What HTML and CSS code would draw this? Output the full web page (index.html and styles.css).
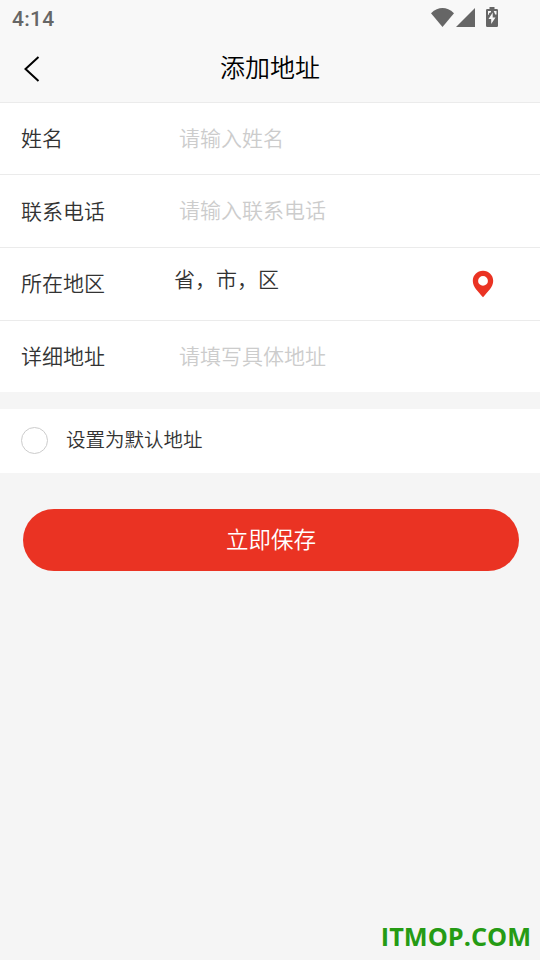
FILE: index.html
```html
<!DOCTYPE html>
<html lang="zh-CN">
<head>
<meta charset="utf-8">
<title>添加地址</title>
<link rel="stylesheet" href="styles.css">
</head>
<body>
<div class="status">
  <span class="time">4:14</span>
  <svg class="status-icons" width="70" height="24" viewBox="0 0 70 24">
    <path d="M1 7.200Q12.500-3 24 7.200L12.500 21Z"/>
    <path d="M26 21L45 2V21Z"/>
    <path d="M59.500 1h5v2h2.300q1.200 0 1.200 1.200v15.600q0 1.200-1.200 1.200h-9.600q-1.200 0-1.200-1.200V4.200q0-1.200 1.200-1.200h2.300Z"/>
    <path class="spark" d="M62.700 6.500l-4.200 6.500h2.700v5l4.300-6.500h-2.800ZM58 5h3v1.300l-1.800.7-.7 2H58ZM63.700 5H66.500v3.500h-1.300Z"/>
  </svg>
</div>
<header class="header">
  <svg class="back" width="16" height="26" viewBox="0 0 16 26"><path d="M14.500 1L1.500 13l13 12"/></svg>
  <h1 class="title">添加地址</h1>
</header>
<main>
  <section class="form">
    <div class="row row-first"><span class="label">姓名</span><span class="hint">请输入姓名</span></div>
    <div class="row"><span class="label label-lowered">联系电话</span><span class="hint">请输入联系电话</span></div>
    <div class="row"><span class="label">所在地区</span><span class="region">省，市，区</span>
      <svg class="pin" width="22" height="28" viewBox="0 0 22 28"><path fill-rule="evenodd" d="M11 .8C5.200.8.800 5.200.800 10.800.800 17 6 21.500 11 27.300 16 21.500 21.200 17 21.200 10.800 21.200 5.200 16.800.8 11 .8ZM11 6a4.900 4.900 0 1 1 0 9.800A4.900 4.900 0 0 1 11 6Z"/></svg>
    </div>
    <div class="row row-last"><span class="label">详细地址</span><span class="hint">请填写具体地址</span></div>
  </section>
  <section class="default"><span class="radio"></span><span class="default-text">设置为默认地址</span></section>
  <button class="save">立即保存</button>
</main>
<footer class="mark">ITMOP.COM</footer>
</body>
</html>
```
FILE: styles.css
```css
* { box-sizing: border-box; }
body {
  margin: 0;
  height: 960px;
  display: flex;
  flex-direction: column;
  overflow: hidden;
  background: #f5f5f5;
  color: #333;
  font-family: "Noto Sans CJK SC", sans-serif;
  font-size: 21px;
  font-weight: 350;
}
.status {
  height: 36px;
  display: flex;
  justify-content: space-between;
  padding: 6px 40px 0 12px;
  background: #f8f8f8;
}
.time {
  font: 500 21px/26px Roboto, sans-serif;
  letter-spacing: 0.3px;
  color: #666;
}
.status-icons { fill: #666; }
.spark { fill: #f8f8f8; }
.header {
  height: 67px;
  display: grid;
  grid-template-columns: 24px 1fr 24px;
  padding: 0 24px;
  background: #f8f8f8;
  border-bottom: 1px solid #ebebeb;
}
.back {
  margin-top: 20px;
  margin-left: -0.5px;
  fill: none;
  stroke: #000;
  stroke-width: 2;
}
.title {
  margin: 0;
  font-size: 25px;
  font-weight: 350;
  line-height: 60px;
  text-align: center;
  color: #000;
}
.row {
  height: 73px;
  display: flex;
  align-items: center;
  padding: 0 46px 0 21px;
  background: #fff;
  border-bottom: 1px solid #ebebeb;
}
.row-first { height: 72px; }
.row-last { height: 71px; border-bottom: 0; }
.label { width: 158px; padding-bottom: 4px; }
.label-lowered { padding-bottom: 2px; }
.hint { color: #ccc; padding-bottom: 4px; }
.region { margin-left: -5px; padding-bottom: 12px; }
.pin { margin-left: auto; fill: #ea3323; }
.default {
  height: 64px;
  margin-top: 17px;
  display: flex;
  align-items: center;
  padding-left: 21px;
  background: #fff;
}
.radio {
  width: 27px;
  height: 27px;
  margin: 0 18px 2px 0;
  border: 1px solid #ccc;
  border-radius: 50%;
}
.default-text { font-size: 19.5px; padding-bottom: 6px; }
.save {
  display: block;
  width: 496px;
  height: 62px;
  margin: 36px 0 0 23px;
  padding: 0 0 4px;
  border: 0;
  border-radius: 31px;
  background: #ea3323;
  color: #fff;
  font: 350 22.5px/58px "Noto Sans CJK SC", sans-serif;
}
.mark {
  margin: auto 9px 6px auto;
  color: #259b14;
  font: 700 25.3px/36px "Open Sans", sans-serif;
}
```
